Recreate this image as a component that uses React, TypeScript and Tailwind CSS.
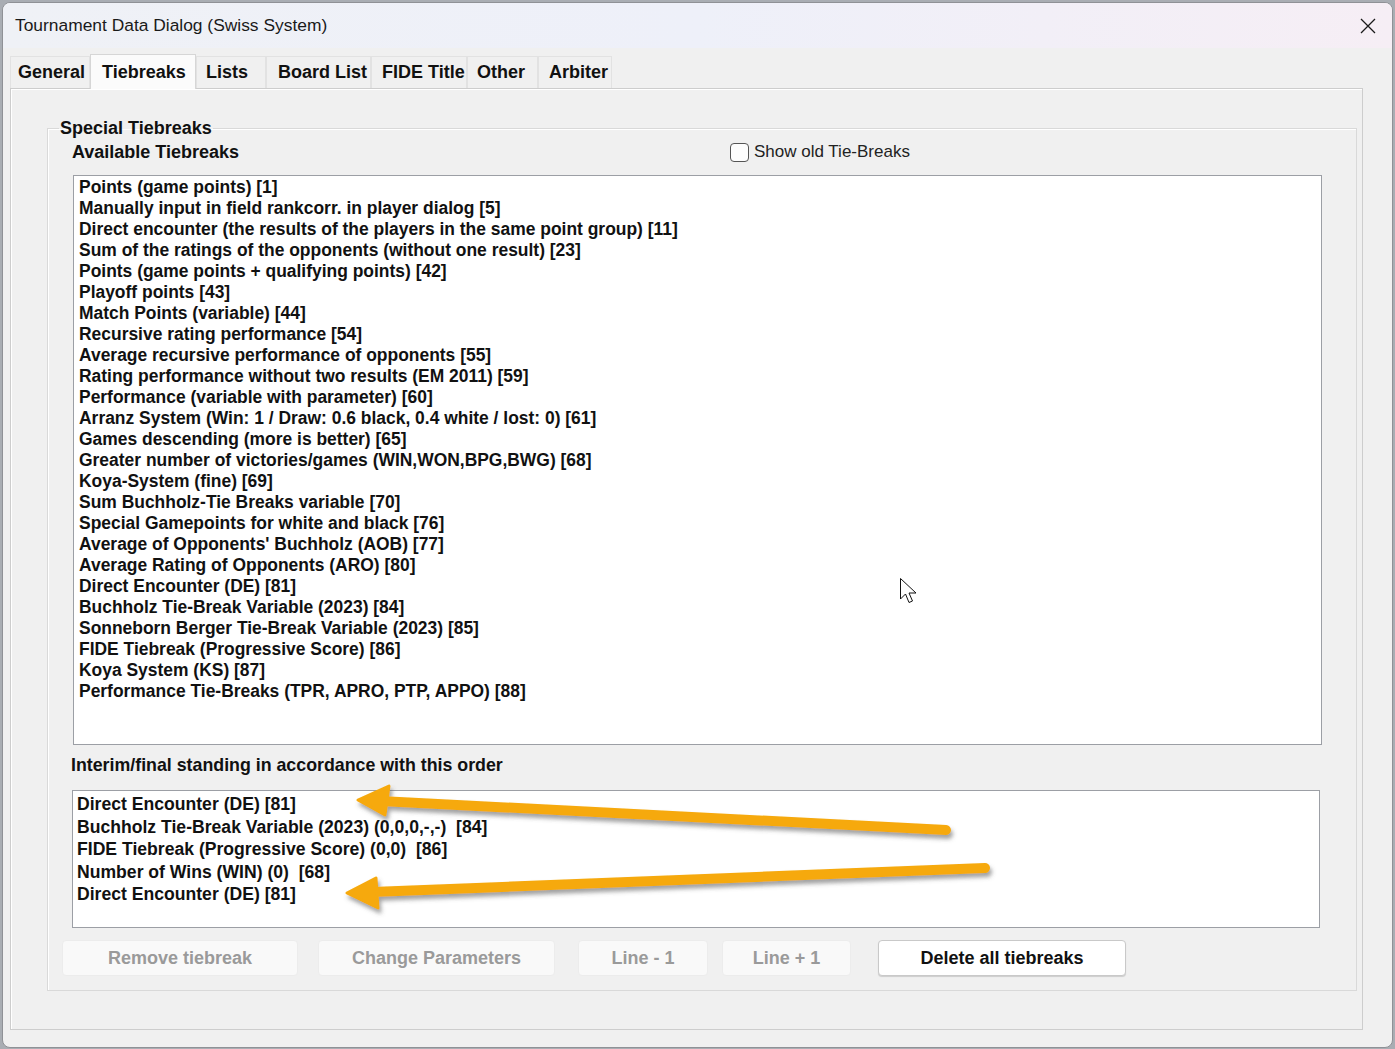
import React from "react";

const available = [
  "Points (game points) [1]",
  "Manually input in field rankcorr. in player dialog [5]",
  "Direct encounter (the results of the players in the same point group) [11]",
  "Sum of the ratings of the opponents (without one result) [23]",
  "Points (game points + qualifying points) [42]",
  "Playoff points [43]",
  "Match Points (variable) [44]",
  "Recursive rating performance [54]",
  "Average recursive performance of opponents [55]",
  "Rating performance without two results (EM 2011) [59]",
  "Performance (variable with parameter) [60]",
  "Arranz System (Win: 1 / Draw: 0.6 black, 0.4 white / lost: 0) [61]",
  "Games descending (more is better) [65]",
  "Greater number of victories/games (WIN,WON,BPG,BWG) [68]",
  "Koya-System (fine) [69]",
  "Sum Buchholz-Tie Breaks variable [70]",
  "Special Gamepoints for white and black [76]",
  "Average of Opponents' Buchholz (AOB) [77]",
  "Average Rating of Opponents (ARO) [80]",
  "Direct Encounter (DE) [81]",
  "Buchholz Tie-Break Variable (2023) [84]",
  "Sonneborn Berger Tie-Break Variable (2023) [85]",
  "FIDE Tiebreak (Progressive Score) [86]",
  "Koya System (KS) [87]",
  "Performance Tie-Breaks (TPR, APRO, PTP, APPO) [88]",
];

const order = [
  "Direct Encounter (DE) [81]",
  "Buchholz Tie-Break Variable (2023) (0,0,0,-,-)  [84]",
  "FIDE Tiebreak (Progressive Score) (0,0)  [86]",
  "Number of Wins (WIN) (0)  [68]",
  "Direct Encounter (DE) [81]",
];

const tabs = [
  { label: "General", cls: "w-[80px] pl-[7px]" },
  { label: "Tiebreaks", cls: "w-[106px] pl-[11px]", active: true },
  { label: "Lists", cls: "w-[70px] pl-[9px]" },
  { label: "Board List", cls: "w-[105px] pl-[11px]" },
  { label: "FIDE Title", cls: "w-[96px] pl-[10px]" },
  { label: "Other", cls: "w-[71px] pl-[9px]" },
  { label: "Arbiter", cls: "w-[74px] pl-[10px]" },
];

const font = { fontFamily: '"Liberation Sans", Arial, sans-serif' };

function Btn({ label, w, enabled }: { label: string; w: string; enabled?: boolean }) {
  return (
    <button
      className={`${w} h-[36px] rounded-[4px] text-[18px] font-bold ${
        enabled
          ? "bg-white border border-[#c9c9c9] text-[#111] shadow-[0_1px_1px_rgba(0,0,0,0.15)]"
          : "bg-[#f9f9f9] border border-[#ececec] text-[#9a9a9a]"
      }`}
    >
      {label}
    </button>
  );
}

export default function App() {
  return (
    <div className="relative w-[1395px] h-[1049px] bg-[#a9adb3] pt-[2px] px-[2px] overflow-hidden" style={font}>
      <div className="h-[1046px] rounded-[8px] border border-[#8f9196] bg-[#f0f0f0] overflow-hidden flex flex-col">
        {/* title bar */}
        <div className="h-[45px] shrink-0 flex items-center justify-between pl-[12px] pr-[16px] bg-gradient-to-r from-[#eff1f6] via-[#eef0f9] to-[#f6eef5]">
          <span className="text-[17.4px] text-[#1a1a1a]">Tournament Data Dialog (Swiss System)</span>
          <svg width="16" height="16" viewBox="0 0 16 16">
            <path d="M1 1 L15 15 M15 1 L1 15" stroke="#1a1a1a" strokeWidth="1.3" />
          </svg>
        </div>

        {/* tabs */}
        <div className="h-[40px] shrink-0 flex items-end pl-[7px]">
          {tabs.map((t) => (
            <div
              key={t.label}
              className={`${t.cls} flex items-center text-[18px] font-bold text-[#111] border-x border-t ${
                t.active
                  ? "h-[35px] bg-[#fbfbfb] border-[#d6d6d6] -mb-[1px] relative z-10"
                  : "h-[32px] bg-[#f0f0f0] border-[#e2e2e2]"
              }`}
            >
              {t.label}
            </div>
          ))}
        </div>

        {/* tab panel */}
        <div className="ml-[7px] w-[1353px] h-[942px] border border-[#cdcdcd] shadow-[inset_1px_1px_0_#ffffff] pl-[36px] pt-[29px]">
          <fieldset className="w-[1310px] border border-[#d9d9d9] shadow-[inset_1px_1px_0_#ffffff]">
            <legend className="ml-[11px] px-[1px] text-[18px] leading-[20px] font-bold text-[#111]">Special Tiebreaks</legend>
            <div className="pl-[14px] pr-[33px] pt-[4px] pb-[14px]">
              <div className="ml-[10px] h-[20px] flex items-center">
                <span className="w-[658px] text-[18px] font-bold text-[#111]">Available Tiebreaks</span>
                <div className="flex items-center gap-[5px]">
                  <div className="w-[19px] h-[19px] rounded-[4px] border-[1.5px] border-[#555] bg-[#fdfdfd]" />
                  <span className="text-[17px] text-[#222]">Show old Tie-Breaks</span>
                </div>
              </div>

              <div className="ml-[11px] mt-[13px] w-[1249px] h-[570px] bg-white border border-[#9c9fa5] pl-[5px] pt-[1px]">
                {available.map((a, i) => (
                  <div key={i} className="text-[17.45px] leading-[21px] font-bold text-[#111] whitespace-nowrap">
                    {a}
                  </div>
                ))}
              </div>

              <div className="ml-[9px] mt-[10px] h-[20px] flex items-center text-[17.8px] font-bold text-[#111]">
                Interim/final standing in accordance with this order
              </div>

              <div className="ml-[10px] mt-[15px] w-[1248px] h-[138px] bg-white border border-[#9c9fa5] pl-[4px] pt-[2px]">
                {order.map((o, i) => (
                  <div key={i} className="text-[17.6px] leading-[22.5px] font-bold text-[#111] whitespace-pre">
                    {o}
                  </div>
                ))}
              </div>

              <div className="mt-[12px] flex items-center">
                <Btn label="Remove tiebreak" w="w-[236px]" />
                <div className="ml-[20px]"><Btn label="Change Parameters" w="w-[237px]" /></div>
                <div className="ml-[23px]"><Btn label="Line - 1" w="w-[130px]" /></div>
                <div className="ml-[14px]"><Btn label="Line + 1" w="w-[129px]" /></div>
                <div className="ml-[27px]"><Btn label="Delete all tiebreaks" w="w-[248px]" enabled /></div>
              </div>
            </div>
          </fieldset>
        </div>
      </div>

      {/* annotation arrows */}
      <svg className="absolute left-0 top-0 pointer-events-none" width="1395" height="1049">
        <defs>
          <filter id="sh" x="-10%" y="-50%" width="120%" height="200%">
            <feDropShadow dx="2" dy="4" stdDeviation="2" floodColor="#555" floodOpacity="0.55" />
          </filter>
        </defs>
        <g filter="url(#sh)" fill="#f6a90c" stroke="#f6a90c" strokeLinecap="round" strokeLinejoin="round">
          <line x1="946" y1="830" x2="380" y2="801" strokeWidth="10" />
          <polygon points="358,800 389,786 385,815" strokeWidth="3" />
          <line x1="985" y1="868" x2="372" y2="892" strokeWidth="10" />
          <polygon points="347,893 376,878 378,908" strokeWidth="3" />
        </g>
        {/* mouse pointer */}
        <path
          d="M900.5 578.5 L900.5 599 L905.5 594 L909 602.5 L912.5 601 L909 593 L916 593 Z"
          fill="#fff"
          stroke="#111"
          strokeWidth="1"
        />
      </svg>
    </div>
  );
}
